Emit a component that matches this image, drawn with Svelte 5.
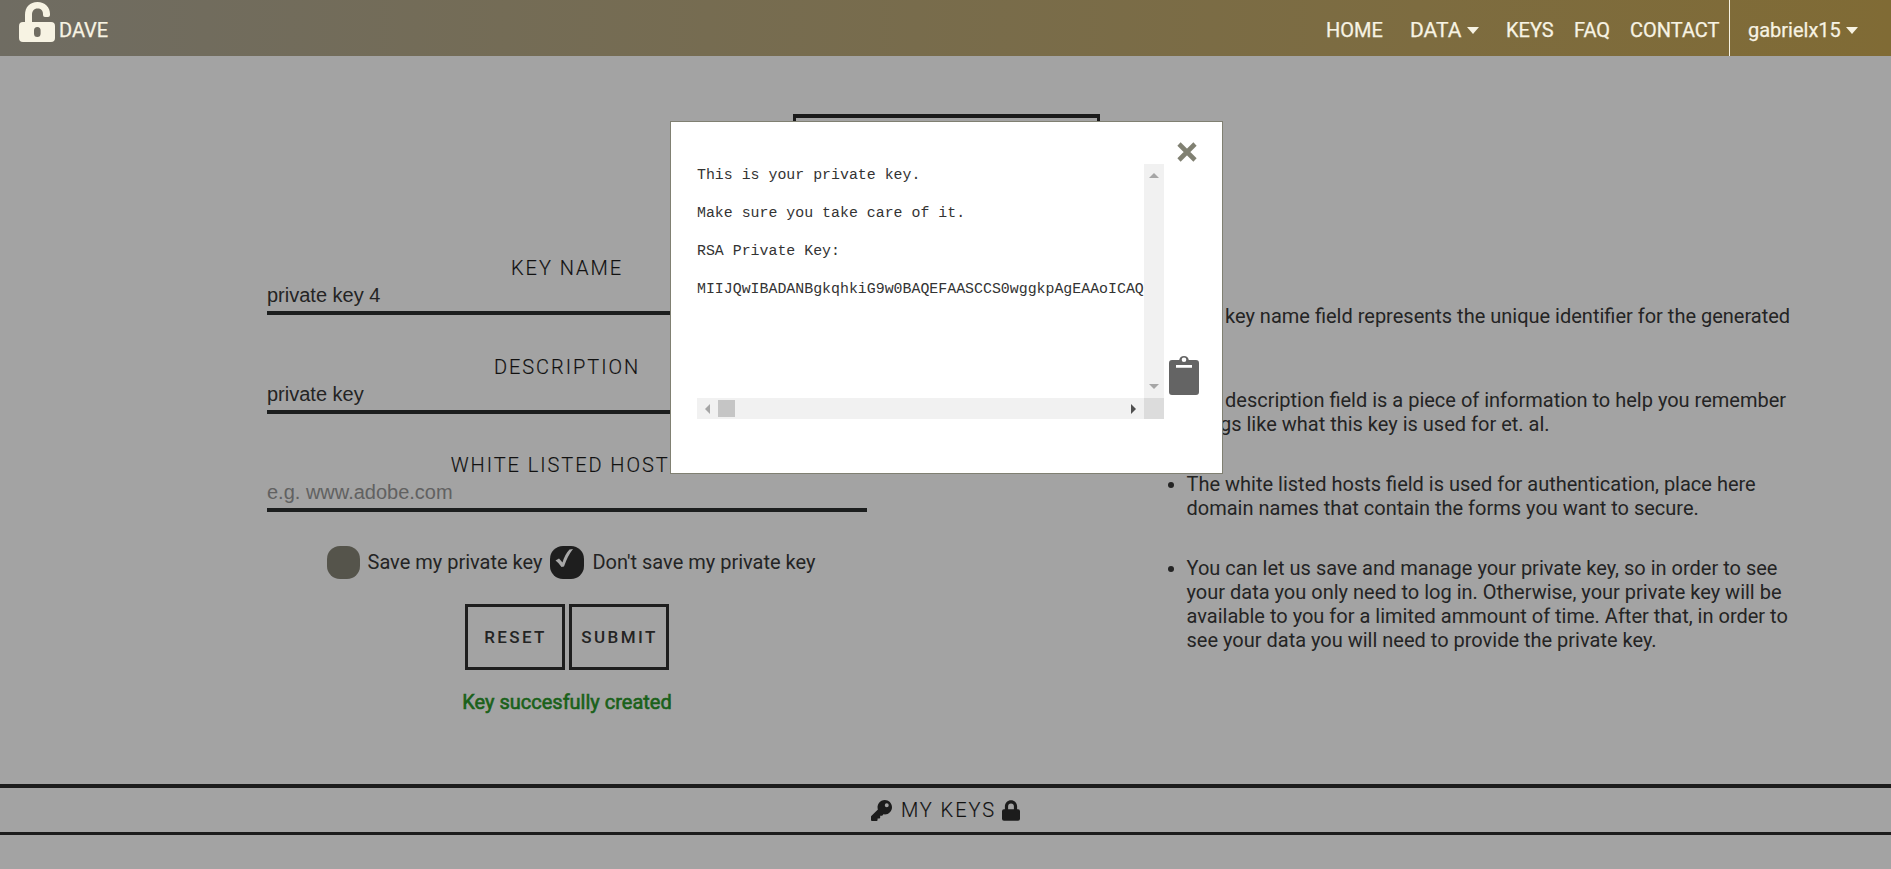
<script>
  const links = ['KEYS', 'FAQ', 'CONTACT'];
  const fields = [
    { label: 'KEY NAME', value: 'private key 4' },
    { label: 'DESCRIPTION', value: 'private key' },
    { label: 'WHITE LISTED HOSTS', value: '', hint: 'e.g. www.adobe.com' }
  ];
  const notes = [
    'The key name field represents the unique identifier for the generated key.',
    'The description field is a piece of information to help you remember things like what this key is used for et. al.',
    'The white listed hosts field is used for authentication, place here domain names that contain the forms you want to secure.',
    'You can let us save and manage your private key, so in order to see your data you only need to log in. Otherwise, your private key will be available to you for a limited ammount of time. After that, in order to see your data you will need to provide the private key.'
  ];
  const keyText = 'This is your private key.\n\nMake sure you take care of it.\n\nRSA Private Key:\n\nMIIJQwIBADANBgkqhkiG9w0BAQEFAASCCS0wggkpAgEAAoICAQ';
</script>

<div class="page">
  <header>
    <div class="brand">
      <svg width="36" height="40" viewBox="0 0 36 40"><path fill="#f7f3e3" fill-rule="evenodd" d="M6 20V13C6 5 11 0 18.500 0S31 5 31 12V13Q31 15 29 15H26Q24 15 24 13V12C24 8.500 22 6.500 18.500 6.500S13 9 13 13V20H32Q36 20 36 24V36Q36 40 32 40H4Q0 40 0 36V24Q0 20 4 20ZM18.300 25Q15 25 15 28.500V31.500Q15 35 18.300 35T21.600 31.500V28.500Q21.600 25 18.300 25Z"/></svg>
      <span>DAVE</span>
    </div>
    <nav>
      <a class="home">HOME</a>
      <a class="data">DATA<i></i></a>
      {#each links as l}<a class={l.toLowerCase()}>{l}</a>{/each}
      <a class="user"><b>gabrielx15</b><i></i></a>
    </nav>
  </header>

  <main>
    <div class="title"></div>
    <div class="columns">
      <form>
        {#each fields as f}
          <label>
            <span>{f.label}</span>
            <div class="input" class:hint={!f.value}>{f.value || f.hint}</div>
          </label>
        {/each}
        <div class="radios">
          <div class="dot"></div><span class="save">Save my private key</span>
          <div class="dot on"><svg width="34" height="33" viewBox="0 0 34 33"><path d="M5.500 14.500L9 12.500L12.500 16.500Q15 8 19.500 3.500L23 3Q17.500 10 14 20.500L11.500 21Q9 17 5.500 14.500Z" fill="#a8a8a8"/></svg></div><span class="dont">Don't save my private key</span>
        </div>
        <div class="buttons"><div class="btn">RESET</div><div class="btn">SUBMIT</div></div>
        <p class="ok">Key succesfully created</p>
      </form>
      <ul>
        {#each notes as n}<li>{n}</li>{/each}
      </ul>
    </div>
  </main>

  <section class="mykeys">
    <svg width="21" height="21" viewBox="0 0 512 512"><path fill="#1c1c1c" d="M512 176c0 97.200-78.800 176-176 176-11.200 0-22.200-1-32.800-3.100l-24 27A24 24 0 0 1 261.200 384H224v40a24 24 0 0 1-24 24h-40v40a24 24 0 0 1-24 24H24a24 24 0 0 1-24-24v-78a24 24 0 0 1 7-17l161.800-161.800A176 176 0 0 1 336 0c97.500 0 176 78.500 176 176zM336 128a48 48 0 1 0 96 0 48 48 0 1 0-96 0z"/></svg>
    <span>MY KEYS</span>
    <svg width="18" height="21" viewBox="0 0 448 512"><path fill="#1c1c1c" d="M400 224h-24v-72C376 68.200 307.800 0 224 0S72 68.200 72 152v72H48a48 48 0 0 0-48 48v192a48 48 0 0 0 48 48h352a48 48 0 0 0 48-48V272a48 48 0 0 0-48-48zm-104 0H152v-72a72 72 0 0 1 144 0z"/></svg>
  </section>

  <div class="modal">
    <div class="area">
      <pre>{keyText}</pre>
      <div class="vbar">
        <svg width="10" height="5"><path d="M0 5L5 0L10 5Z" fill="#a6a6a6"/></svg>
        <svg width="10" height="5"><path d="M0 0L5 5L10 0Z" fill="#a6a6a6"/></svg>
      </div>
      <div class="hbar">
        <svg width="5" height="10"><path d="M5 0L0 5L5 10Z" fill="#a6a6a6"/></svg>
        <div class="thumb"></div>
        <svg class="right" width="5" height="10"><path d="M0 0L5 5L0 10Z" fill="#505050"/></svg>
      </div>
      <div class="corner"></div>
    </div>
    <div class="side">
      <svg width="20" height="20" viewBox="0 0 20 20"><path d="M2 2L18 18M18 2L2 18" stroke="#808072" stroke-width="4.600"/></svg>
      <svg width="30" height="40" viewBox="0 0 30 40"><path fill="#646464" fill-rule="evenodd" d="M3 5H10.200A4.900 4.900 0 0 1 19.800 5H27Q30 5 30 8V37Q30 40 27 40H3Q0 40 0 37V8Q0 5 3 5ZM15 2.500A2.300 2.300 0 1 0 15 7.100A2.300 2.300 0 1 0 15 2.500ZM7 10V12.700H23V10Z"/></svg>
    </div>
  </div>
</div>

<style>
  :global(body) { margin: 0; background: #a3a3a3; overflow: hidden; }
  .page { height: 869px; overflow: hidden; display: flex; flex-direction: column; background: #a3a3a3; color: #242424; font: 400 20px/24px Roboto, sans-serif; box-sizing: border-box; }
  header { height: 56px; flex: none; display: flex; justify-content: space-between; background: linear-gradient(90deg, #6f6c62, #7d6c40 75%, #806b35); color: #f7f3e3; -webkit-text-stroke: .25px; }
  .brand { display: flex; padding: 2px 0 0 18.500px; }
  .brand span { margin: 16px 0 0 4.500px; }
  nav { display: flex; line-height: 60px; }
  nav a { display: flex; }
  nav i { width: 0; height: 0; border: 6px solid transparent; border-top: 7px solid #f7f3e3; border-bottom: 0; margin: 27px 0 0 5.500px; }
  .home { width: 84px; }
  .data { width: 96px; font-size: 21px; }
  .keys { width: 68px; }
  .faq { width: 56px; }
  .contact { width: 99px; }
  .user { width: 143px; border-left: 1px solid #f7f3e3; padding-left: 18px; height: 56px; }
  b { font-weight: 400; }
  .title { width: 301px; height: 60px; border: 4px solid #1a1a1a; border-width: 4px 3px; margin: 58px 0 0 793px; }
  main { height: 728px; }
  .columns { display: flex; margin-top: 72px; }
  form { width: 600px; margin-left: 267px; flex: none; display: flex; flex-direction: column; align-items: center; }
  label { display: flex; flex-direction: column; width: 600px; height: 98.500px; align-items: center; }
  label span { letter-spacing: 1.950px; line-height: 24px; margin-top: 2px; font-weight: 300; color: #111; -webkit-text-stroke: .15px; }
  .input { width: 600px; height: 31px; line-height: 30px; border-bottom: 4px solid #1c1e1e; font-family: "Liberation Sans", sans-serif; }
  .hint { color: #616161; }
  .radios { display: flex; line-height: 33px; margin: -3.500px 0 0 8px; }
  .dot { width: 33px; height: 33px; border-radius: 13px; background: #55544b; }
  .dot.on { width: 34px; background: #1e1e1e; }
  .save { margin: 0 8px; }
  .dont { margin-left: 8px; }
  .buttons { display: flex; gap: 4px; margin: 25px 1px 0 0; }
  .btn { width: 88px; height: 60px; border: 3px solid #1e1e1e; padding: 0 3px; margin-right: 0; font-size: 17px; line-height: 61px; text-align: center; letter-spacing: 2.400px; font-weight: 500; text-indent: 2px; }
  .ok { margin: 20px 0 0; color: #1a611a; -webkit-text-stroke: .6px; }
  ul { margin: 50px 0 0 280px; width: 613px; padding: 0 0 0 39.500px; box-sizing: content-box; }
  li { margin-bottom: 36px; }
  .mykeys { flex: none; height: 44px; border: solid #1c1c1c; border-width: 4px 0 3px; display: flex; align-items: center; justify-content: center; letter-spacing: 1.950px; font-weight: 300; color: #111; -webkit-text-stroke: .15px; }
  .mykeys span { margin: 0 6px 0 9px; }
  .modal { position: absolute; left: 670px; top: 121px; border: 1px solid #808072; background: #fff; display: flex; padding: 42px 0 0 26px; box-sizing: border-box; width: 553px; height: 353px; }
  .area { width: 467px; height: 255px; display: grid; grid-template: 234px 21px / 447px 20px; }
  pre { margin: 0; padding-top: 2px; overflow: hidden; font: 14.900px/19px "Liberation Mono", monospace; color: #333; }
  .vbar { background: #f1f1f1; display: flex; flex-direction: column; justify-content: space-between; align-items: center; padding: 9px 0; }
  .hbar { background: #f1f1f1; display: flex; align-items: center; padding: 0 8px; }
  .thumb { width: 17px; height: 17px; background: #c5c5c5; margin-left: 8px; }
  .right { margin-left: auto; }
  .corner { background: #dcdcdc; }
  .side { margin: -22px 0 0 5px; display: flex; flex-direction: column; }
  .side svg:first-child { margin: 0 0 193px 8px; }
</style>
